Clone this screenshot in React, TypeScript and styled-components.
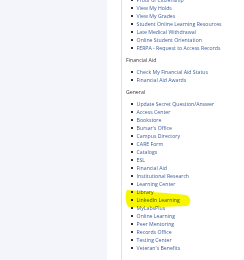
import React from "react";
import styled, { createGlobalStyle } from "styled-components";

const Global = createGlobalStyle`
  html, body { margin: 0; padding: 0; background: #ffffff; }
  body { width: 244px; height: 260px; overflow: hidden; font-family: "Open Sans", "Liberation Sans", sans-serif; }
`;

const Page = styled.div`
  display: flex;
  width: 244px;
  height: 260px;
  overflow: hidden;
`;

const SidePanel = styled.div`
  width: 107px;
  flex: none;
  background: #f4f5fa;
`;

const Gutter = styled.div`
  width: 14px;
  flex: none;
`;

const Content = styled.div`
  position: relative;
  flex: 1;
  border-left: 1.5px solid #d3e4f7;
  padding: 0 0 0 4px;
  margin-top: -4px;
`;

const Heading = styled.div`
  font-size: 5.2px;
  line-height: 8px;
  color: #3a3a3a;
  margin: 4px 0 4px 0;
`;

const List = styled.ul`
  list-style: none;
  margin: 0;
  padding: 0 0 0 5px;
`;

const Item = styled.li`
  display: flex;
  align-items: center;
  height: 8px;
  font-size: 5.2px;
  color: #3d5f9c;
  white-space: nowrap;
  &::before {
    content: "";
    width: 1.6px;
    height: 1.6px;
    background: #333;
    margin-right: 4px;
    flex: none;
  }
`;

const Highlight = styled.svg`
  position: absolute;
  left: 0;
  top: 0;
  pointer-events: none;
  mix-blend-mode: multiply;
`;

const top = [
  "Proof of Citizenship",
  "View My Holds",
  "View My Grades",
  "Student Online Learning Resources",
  "Late Medical Withdrawal",
  "Online Student Orientation",
  "FERPA - Request to Access Records",
];
const aid = ["Check My Financial Aid Status", "Financial Aid Awards"];
const general = [
  "Update Secret Question/Answer",
  "Access Center",
  "Bookstore",
  "Bursar's Office",
  "Campus Directory",
  "CARE Form",
  "Catalogs",
  "ESL",
  "Financial Aid",
  "Institutional Research",
  "Learning Center",
  "Library",
  "LinkedIn Learning",
  "MyLabsPlus",
  "Online Learning",
  "Peer Mentoring",
  "Records Office",
  "Testing Center",
  "Veteran's Benefits",
];

export default function App() {
  return (
    <Page>
      <Global />
      <SidePanel />
      <Gutter />
      <Content>
        <List>
          {top.map((t) => (
            <Item key={t}>{t}</Item>
          ))}
        </List>
        <Heading>Financial Aid</Heading>
        <List>
          {aid.map((t) => (
            <Item key={t}>{t}</Item>
          ))}
        </List>
        <Heading>General</Heading>
        <List>
          {general.map((t) => (
            <Item key={t}>{t}</Item>
          ))}
        </List>
        <Highlight width="123" height="264" viewBox="0 0 123 264">
          <path
            d="M5 194 C 20 195, 45 197, 64 199 C 69 200, 70 208, 65 210 C 50 211, 25 211, 7 211 C 3 209, 3 197, 5 194 Z"
            fill="#f7f500"
          />
        </Highlight>
      </Content>
    </Page>
  );
}
